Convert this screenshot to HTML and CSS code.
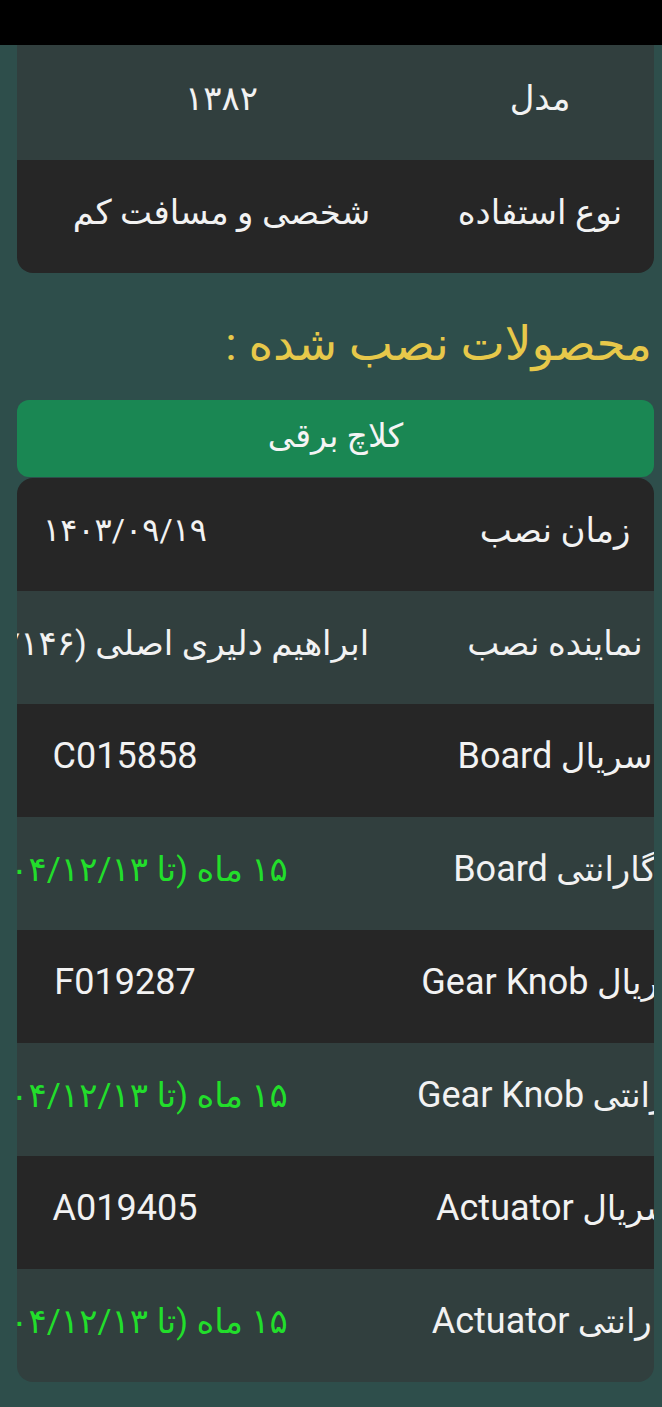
FILE: index.html
```html
<!DOCTYPE html>
<html lang="fa" dir="rtl">
<head>
<meta charset="utf-8">
<title>محصولات نصب شده</title>
<link rel="stylesheet" href="styles.css">
</head>
<body>
<div class="statusbar"></div>
<main class="page">
  <section class="card card-top">
    <div class="row teal">
      <div class="cell label">مدل</div>
      <div class="cell value">۱۳۸۲</div>
    </div>
    <div class="row dark">
      <div class="cell label">نوع استفاده</div>
      <div class="cell value">شخصی و مسافت کم</div>
    </div>
  </section>

  <h2 class="heading">محصولات نصب شده :</h2>

  <div class="product-btn">کلاچ برقی</div>

  <section class="card card-products">
    <div class="row dark">
      <div class="cell label">زمان نصب</div>
      <div class="cell value date">۱۴۰۳/۰۹/۱۹</div>
    </div>
    <div class="row teal">
      <div class="cell label">نماینده نصب</div>
      <div class="cell value">ابراهیم دلیری اصلی (۰۹۱۴۰۸۷۱۴۶)</div>
    </div>
    <div class="row dark">
      <div class="cell label">سریال <span class="en">Board</span></div>
      <div class="cell value"><span class="en">C015858</span></div>
    </div>
    <div class="row teal">
      <div class="cell label">گارانتی <span class="en">Board</span></div>
      <div class="cell value green">۱۵ ماه (تا ۱۴۰۴/۱۲/۱۳)</div>
    </div>
    <div class="row dark">
      <div class="cell label">سریال <span class="en">Gear Knob</span></div>
      <div class="cell value"><span class="en">F019287</span></div>
    </div>
    <div class="row teal">
      <div class="cell label">گارانتی <span class="en">Gear Knob</span></div>
      <div class="cell value green">۱۵ ماه (تا ۱۴۰۴/۱۲/۱۳)</div>
    </div>
    <div class="row dark">
      <div class="cell label">سریال <span class="en">Actuator</span></div>
      <div class="cell value"><span class="en">A019405</span></div>
    </div>
    <div class="row teal">
      <div class="cell label">گارانتی <span class="en">Actuator</span></div>
      <div class="cell value green">۱۵ ماه (تا ۱۴۰۴/۱۲/۱۳)</div>
    </div>
  </section>
</main>
</body>
</html>
```

FILE: styles.css
```css
html, body {
  margin: 0;
  padding: 0;
}
body {
  background: #2e4e4b;
  font-family: Roboto, "DejaVu Sans", sans-serif;
  color: #f2f2f2;
  direction: rtl;
  min-height: 1407px;
}
.statusbar {
  height: 45px;
  background: #000;
}
.page {
  padding: 0 8px 0 17px;
  display: flex;
  flex-direction: column;
}
.card {
  overflow: hidden;
  display: flex;
  flex-direction: column;
}
.card-top {
  border-radius: 0 0 16px 16px;
}
.card-products {
  border-radius: 16px;
  margin-top: 1px;
}
.row {
  display: grid;
  height: 113px;
  align-items: center;
}
.card-top .row {
  grid-template-columns: 228px 409px;
}
.card-top .row:first-child {
  height: 115px;
}
.card-products .row {
  grid-template-columns: 198px 223px 216px;
}
.card-products .value {
  grid-column: 3;
}
.teal {
  background: #313f3e;
}
.dark {
  background: #262626;
}
.cell {
  display: flex;
  justify-content: center;
  align-items: center;
  white-space: pre;
  font-size: 34px;
  min-width: 0;
  padding-bottom: 10px;
}
.date {
  font-size: 32px;
  letter-spacing: -1px;
}
.en {
  font-size: 36px;
}
.green {
  color: #22de2b;
}
.heading {
  margin: 39px 2px 25px 0;
  font-size: 47px;
  font-weight: normal;
  color: #e7c84a;
  line-height: 63px;
}
.product-btn {
  height: 77px;
  padding-bottom: 6px;
  box-sizing: border-box;
  background: #1a8753;
  border-radius: 12px;
  display: flex;
  align-items: center;
  justify-content: center;
  font-size: 33px;
  color: #f4f4f4;
}
```
